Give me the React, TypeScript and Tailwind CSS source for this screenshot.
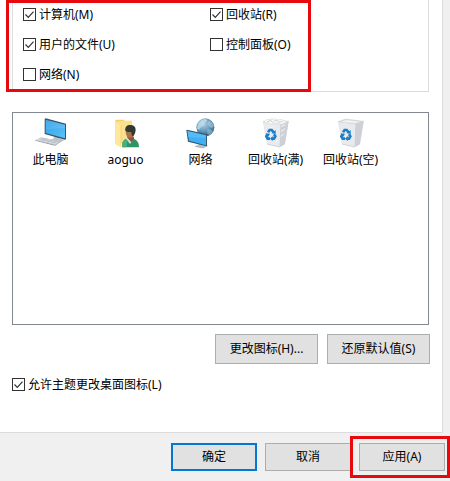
import type { ComponentProps, ReactNode } from "react";
import clsx from "clsx";

function ComputerIcon() {
  return (
    <svg viewBox="0 0 96 96" className="size-8" aria-hidden="true">
      <defs>
        <linearGradient id="pc-screen" x1="0" y1="0" x2="1" y2="1">
          <stop offset="0" stopColor="#2f9fe8" />
          <stop offset="1" stopColor="#5cc3fb" />
        </linearGradient>
      </defs>
      <path d="M56 52l18 5v5l12 3-14 7-27-6 12-5z" fill="#b9c3cb" />
      <path d="M45 66l27 6 14-7v2l-14 7-27-6z" fill="#8a959e" />
      <path d="M29 3l3-2 61 16v47l-3 1-61-17z" fill="#3b5566" />
      <path d="M32 5l58 15v41L32 45z" fill="url(#pc-screen)" />
      <path d="M32 5l58 15v10L32 34z" fill="#fff" opacity=".1" />
      <path d="M1 66l17-9 57 14-15 9z" fill="#d5dade" />
      <path d="M1 66l59 14 15-9v2L60 83 1 68z" fill="#8e989f" />
      <path d="M13 63l52 12M19 60l52 12M20 70l16-9M35 74l16-9M49 77l15-9" stroke="#a9b2b8" strokeWidth="1.5" fill="none" />
    </svg>
  );
}

function UserFolderIcon() {
  return (
    <svg viewBox="0 0 96 96" className="size-8" aria-hidden="true">
      <path d="M16 7l3-2h21l4 3h21v68H16z" fill="#f3cf69" />
      <path d="M24 9h41v66H24z" fill="#fae08c" />
      <path d="M16 7l17 17v64L18 80l-2-3z" fill="#ffe79b" />
      <path d="M33 24v62" stroke="#e6c263" strokeWidth="1.5" />
      <path d="M37 88c-2-19 5-25 20-28 18 0 30 8 30 28z" fill="#2f9366" />
      <path d="M37 88c-2-15 3-23 13-26 3 10 2 18-2 26z" fill="#49ad7c" />
      <path d="M52 54l18 1 3 6-8 10-13-10z" fill="#8f5636" />
      <path d="M47 61l5-2 12 14-4 5z" fill="#cfe3d6" />
      <ellipse cx="60" cy="42" rx="13" ry="18" fill="#a9714c" />
      <path d="M46 38c-2-12 6-18 17-17 12 1 16 10 13 21-2 7-4 11-8 13-4-4-3-8-4-13-7 0-13 0-18-4z" fill="#2f3a33" />
    </svg>
  );
}

function NetworkIcon() {
  return (
    <svg viewBox="0 0 96 96" className="size-8" aria-hidden="true">
      <defs>
        <radialGradient id="globe" cx=".4" cy=".3" r=".7">
          <stop offset="0" stopColor="#b4d4e4" />
          <stop offset=".55" stopColor="#6a9dbd" />
          <stop offset="1" stopColor="#2f668f" />
        </radialGradient>
      </defs>
      <circle cx="61" cy="28" r="27" fill="url(#globe)" />
      <path d="M38 20c4-10 14-17 24-17l5 6-9 5-1 8-8 4-6 9-7-3z" fill="#c3dfe8" opacity=".75" />
      <path d="M72 8c8 3 13 9 15 17l-6 5-7-4-7-8z" fill="#b6d8e4" opacity=".5" />
      <path d="M67 32l12 3 5 7-10 10-7-6z" fill="#a4ccdc" opacity=".5" />
      <path d="M39 74l18 3v3l10 2-12 7-24-5 9-4z" fill="#b6c1c9" />
      <path d="M31 84l24 5 12-7v2l-12 7-24-5z" fill="#85919a" />
      <path d="M4 37l2-2 60 14v34l-2 2L9 71z" fill="#36566d" />
      <path d="M7 39l56 13v30L12 68z" fill="#3eb0f3" />
      <path d="M7 39l56 13v8L10 57z" fill="#72c9fa" opacity=".45" />
    </svg>
  );
}

function RecycleMark() {
  return (
    <g fill="none" stroke="#1b7fca" strokeWidth="8">
      <path d="M24 43l5-7h6l6 7" />
      <path d="M22 49l-3 6 4 7h7" />
      <path d="M36 62h6l4-7-4-6" />
      <path d="M35 46l12 2V36zM17 46l13 1-5 9zM38 54v15l-8-7z" fill="#1b7fca" stroke="none" />
    </g>
  );
}

function RecycleBinIcon({ full = false }: { full?: boolean }) {
  return (
    <svg viewBox="0 0 96 96" className="size-8" aria-hidden="true">
      <path d="M9 11l52 6 25-7-11 67-17 10-37-9z" fill="#e4e6e9" />
      <path d="M61 17l25-7-11 67-17 10z" fill="#cdd0d6" />
      <path d="M9 11l52 6-3 70-37-9z" fill="#e8eaed" />
      <path d="M9 11L32 3l54 7-25 8z" fill={full ? "#f8f9fa" : "#d5d8dd"} stroke="#c9cdd2" strokeWidth="1.5" />
      {full ? (
        <>
          <path d="M12 12l8-8 13 3 11-6 9 6 13-3 5 5 13 2-20 8-17-3-13 2z" fill="#f8f9fa" stroke="#cdd1d6" strokeWidth="1.5" />
          <path d="M21 11l11-3 5 5 11-7 6 7 14-3" stroke="#b8bec5" strokeWidth="2" fill="none" />
          <path d="M64 25l12-5M63 41l12-9M62 55l9-7M22 24l11 5 11-4M47 74l6-8" stroke="#f5f6f8" strokeWidth="3" fill="none" />
        </>
      ) : (
        <path d="M17 12l17-6 43 5-17 5z" fill="#eff1f3" />
      )}
      <path d="M21 78l37 9 17-10" stroke="#bfc4ca" strokeWidth="2" fill="none" />
      <RecycleMark />
    </svg>
  );
}

function CheckBox({ id, label, checked = false }: { id: string; label: string; checked?: boolean }) {
  return (
    <div className="flex h-[21px] items-center gap-[3px]">
      <span className="grid size-[13px]">
        <input
          id={id}
          type="checkbox"
          defaultChecked={checked}
          className="peer col-start-1 row-start-1 size-[13px] appearance-none border border-[#333] bg-white"
        />
        <svg
          viewBox="0 0 13 13"
          className="pointer-events-none invisible col-start-1 row-start-1 size-[13px] peer-checked:visible"
          aria-hidden="true"
        >
          <path d="M2.5 6.5l2.8 2.8 5.2-5.6" fill="none" stroke="#333" strokeWidth="1.2" />
        </svg>
      </span>
      <label htmlFor={id} className="whitespace-nowrap">
        {label}
      </label>
    </div>
  );
}

function Button({ className, ...props }: ComponentProps<"button">) {
  return (
    <button
      type="button"
      className={clsx("flex items-center justify-center bg-[#e1e1e1] whitespace-nowrap", className)}
      {...props}
    />
  );
}

const desktopIcons: { name: string; icon: ReactNode }[] = [
  { name: "此电脑", icon: <ComputerIcon /> },
  { name: "aoguo", icon: <UserFolderIcon /> },
  { name: "网络", icon: <NetworkIcon /> },
  { name: "回收站(满)", icon: <RecycleBinIcon full /> },
  { name: "回收站(空)", icon: <RecycleBinIcon /> },
];

export default function App() {
  return (
    <div className="min-h-screen bg-[#f0f0f0] font-['Noto_Sans','Noto_Sans_CJK_SC',sans-serif] text-[12px] leading-[18px] text-black">
      <main className="mr-[7px] border-r border-b border-[#dcdcdc] bg-white pr-3 pb-[37px] pl-3">
        <fieldset className="relative mr-px border border-t-0 border-[#dcdcdc] pt-1 pb-1.5 pl-2.5">
          <div className="grid grid-cols-[187px_1fr] gap-y-[9px]">
            <CheckBox id="computer" label="计算机(M)" checked />
            <CheckBox id="recycle" label="回收站(R)" checked />
            <CheckBox id="files" label="用户的文件(U)" checked />
            <CheckBox id="panel" label="控制面板(O)" />
            <CheckBox id="network" label="网络(N)" />
          </div>
          <div className="pointer-events-none absolute top-0 -bottom-px -left-[7px] w-[305px] border-3 border-[#e60a0f]" />
        </fieldset>

        <ul className="mt-5 mr-px flex min-h-[213px] flex-wrap content-start border border-[#828790] pt-[5px]">
          {desktopIcons.map(({ name, icon }) => (
            <li key={name} className="flex w-[75px] flex-col items-center gap-px">
              {icon}
              <span className="whitespace-nowrap">{name}</span>
            </li>
          ))}
        </ul>

        <div className="mt-[9px] flex justify-end gap-[9px]">
          <Button className="h-[30px] w-[103px] border border-[#adadad]">更改图标(H)...</Button>
          <Button className="h-[30px] w-[103px] border border-[#adadad]">还原默认值(S)</Button>
        </div>

        <div className="mt-[10px]">
          <CheckBox id="themes" label="允许主题更改桌面图标(L)" checked />
        </div>
      </main>

      <footer className="flex justify-end gap-2 pt-[10px] pr-[5px] pb-[10px]">
        <Button className="h-7 w-[86px] border-2 border-[#0078d7]">确定</Button>
        <Button className="h-7 w-[86px] border border-[#adadad]">取消</Button>
        <div className="relative">
          <Button className="h-7 w-[86px] border border-[#adadad]">应用(A)</Button>
          <div className="pointer-events-none absolute -top-[7px] -right-[5px] -bottom-[7px] -left-[9px] border-3 border-[#e60a0f]" />
        </div>
      </footer>
    </div>
  );
}
